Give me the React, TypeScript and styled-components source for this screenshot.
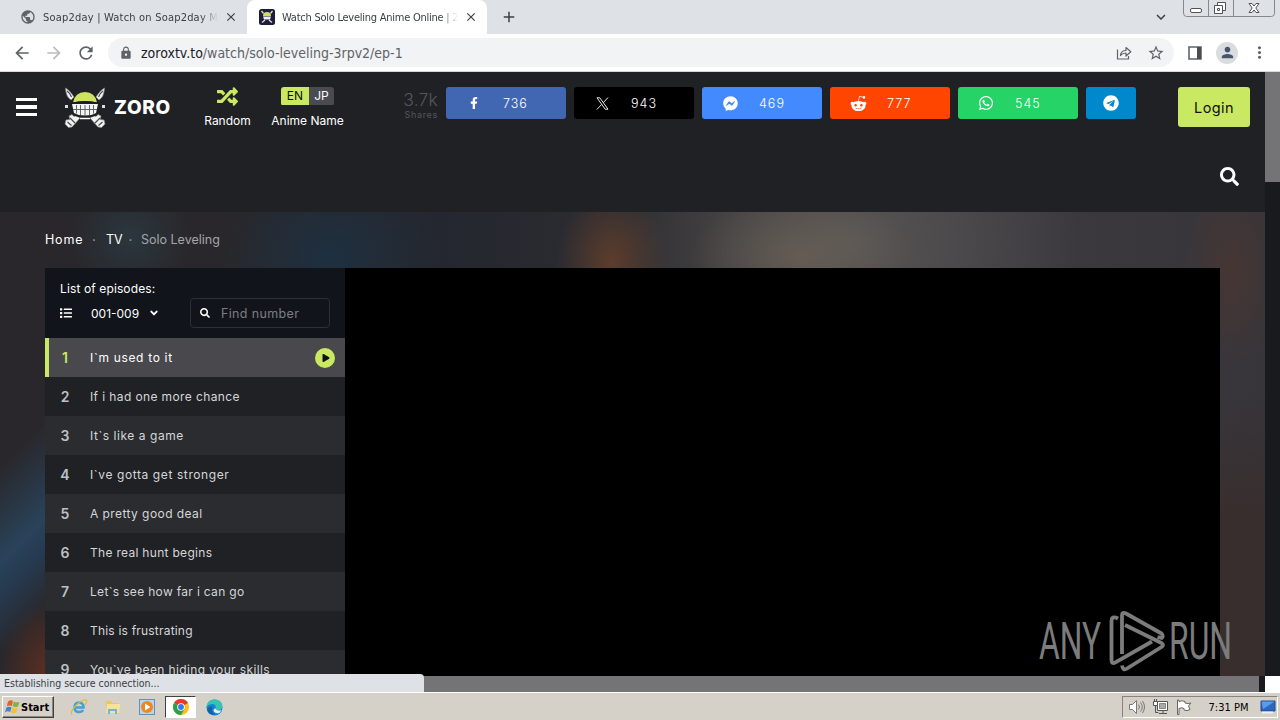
import React from 'react';
import styled, { createGlobalStyle, css } from 'styled-components';
import { FaRandom, FaFacebookF, FaFacebookMessenger, FaWhatsapp, FaTelegram, FaSearch, FaList, FaAngleDown, FaPlay, FaRedditAlien } from 'react-icons/fa';
import { MdArrowBack, MdArrowForward, MdRefresh, MdLock, MdStarBorder, MdClose, MdAdd, MdMoreVert, MdPerson, MdPublic, MdKeyboardArrowDown } from 'react-icons/md';

interface Episode {
  title: string;
  spacing: number;
}

const episodes: Episode[] = [
  { title: 'I`m used to it', spacing: 0.67 },
  { title: 'If i had one more chance', spacing: 0.39 },
  { title: 'It`s like a game', spacing: 0.54 },
  { title: 'I`ve gotta get stronger', spacing: 0.6 },
  { title: 'A pretty good deal', spacing: 0.43 },
  { title: 'The real hunt begins', spacing: 0.3 },
  { title: 'Let`s see how far i can go', spacing: 0.32 },
  { title: 'This is frustrating', spacing: 0.2 },
  { title: 'You`ve been hiding your skills', spacing: 0.37 },
];

const XLogo = () => (
  <svg width="13" height="13" viewBox="0 0 13 13" fill="none" stroke="#fff">
    <path d="M1 .8h2.800l8.200 11.400H9.200z" strokeWidth="0.900" />
    <path d="M12 .5L7.300 5.700M5.600 7.500L.8 12.500" strokeWidth="0.900" />
  </svg>
);

const shares = [
  { name: 'facebook', color: '#4267b2', count: '736', icon: <FaFacebookF size={12} /> },
  { name: 'x', color: '#000000', count: '943', icon: <XLogo /> },
  { name: 'messenger', color: '#448aff', count: '469', icon: <FaFacebookMessenger size={15} /> },
  { name: 'reddit', color: '#ff4500', count: '777', icon: <FaRedditAlien size={17} /> },
  { name: 'whatsapp', color: '#25d366', count: '545', icon: <FaWhatsapp size={16} /> },
];

const SkullLogo = () => (
  <svg width="42" height="42" viewBox="0 0 42 42">
    <g fill="#f2f2f2" stroke="#8b8b8e" strokeWidth="0.700">
      <path d="M1.500 1q4 2 8.500 9l-3 3Q2 10 1.500 1zM40.500 1q-4 2-8.500 9l3 3q5-3 5.500-12z" />
      <path d="M13 28l3 3-8 9-3.500.5L1 37l1-4 4-.5L5 29l3-1.500 2 2zM29 28l-3 3 8 9 3.500.5L41 37l-1-4-4-.5 1-3.500-3-1.500-2 2z" />
    </g>
    <path d="M3 4q3 2 4.500 6M39 4q-3 2-4.500 6M6 31l5 5M3.500 35l4 3.500M36 31l-5 5M38.500 35l-4 3.500" stroke="#4a4a4d" strokeWidth="1.200" fill="none" />
    <path d="M1 19.500h3M38 19.500h3" stroke="#ddd" strokeWidth="3" />
    <path d="M6 14h30l-3 14q-5 3-12 3T9 28z" fill="#202125" />
    <path d="M8 17h26l-2 9q-4 2.500-11 2.500T10 26z" fill="#f4f4f4" />
    <path d="M12.500 18v8.500M16.500 18v10M21 18v11M25.500 18v10M29.500 18v8.500M9 22.500h24" stroke="#55575b" strokeWidth="0.900" />
    <path d="M9 15.500Q11 5 21 5t12 10.500q-12-2.500-24 0z" fill="#d0e164" />
    <path d="M7 16.500q14-3.500 28 0" stroke="#191a1c" strokeWidth="1.600" fill="none" />
    <path d="M16 31.500h10" stroke="#fff" strokeWidth="1.500" />
  </svg>
);

const ZoroFavicon = () => (
  <svg width="16" height="16" viewBox="0 0 16 16">
    <rect width="16" height="16" rx="2.500" fill="#1d1c3a" />
    <path d="M2.500 2l2 2.500M13.500 2l-2 2.500M3 13.500l3-2.500M13 13.500l-3-2.500" stroke="#ddd" strokeWidth="1.300" />
    <path d="M4 7q0-4 4-4t4 4z" fill="#d3dc62" />
    <path d="M4 7.500h8l-1 3H5z" fill="#eee" />
  </svg>
);

const ShareIcon = () => (
  <svg width="16" height="16" viewBox="0 0 16 16" fill="none" stroke="#5f6368" strokeWidth="1.200">
    <path d="M1.500 4.500v9.500h11v-3" />
    <path d="M4.500 10.500q.5-5 5.500-5v-3l4.800 4.300-4.800 4.200v-3q-3.500 0-5.500 2.500z" strokeLinejoin="round" />
  </svg>
);

const SidePanelIcon = () => (
  <svg width="14" height="14" viewBox="0 0 14 14">
    <path d="M1 1h12v12H1z" fill="none" stroke="#5f6368" strokeWidth="1.600" />
    <path d="M9 1h4v12H9z" fill="#4a4d51" />
  </svg>
);

const WindowButtons = () => (
  <svg width="97" height="17" viewBox="0 0 97 17" fill="none">
    <path d="M.5 0v13q0 3.500 3 3.500h85q3 0 3-3.500V0M25.500 0v16M50.500 0v16" stroke="#85888e" />
    <rect x="7.500" y="8.500" width="11" height="4" rx="1.500" fill="#fff" stroke="#4f5259" />
    <path d="M34.500 2.500h8v8h-8z" fill="#fff" stroke="#4f5259" />
    <path d="M31.500 5.500h8v8h-8z" fill="#fff" stroke="#4f5259" />
    <path d="M34.500 8.500h2v2h-2z" stroke="#4f5259" />
    <path d="M66 3.500h3l2 2.500 2-2.500h3L72.800 8l3.200 4.500h-3L71 10l-2 2.500h-3L69.200 8z" fill="#fff" stroke="#4f5259" />
  </svg>
);

const MenuBars = () => (
  <svg width="21" height="18" viewBox="0 0 21 18" fill="#fff">
    <path d="M0 0h21v3H0zM0 7h21v4H0zM0 15h21v3H0z" />
  </svg>
);

const WindowsFlag = () => (
  <svg width="16" height="16" viewBox="0 0 16 16">
    <path d="M3 2.500q3-2 5-.5L6.800 7q-2.500-1.200-5 .3z" fill="#e5602b" />
    <path d="M8.800 2.500q2.500 1.600 5.700.2l-1.500 4.800q-3 1.300-5.400-.2z" fill="#82b440" />
    <path d="M1.400 8.500q2.500-1.500 5.100-.3L5.200 13q-2.500-1.500-5.200.2z" fill="#3f84c6" />
    <path d="M7.300 8.600q2.500 1.500 5.500.2l-1.500 4.800q-3 1.400-5.400-.2z" fill="#f5c22e" />
  </svg>
);

const IeIcon = () => (
  <svg width="18" height="18" viewBox="0 0 18 18" fill="none">
    <path d="M4.500 9.500h9q0-5-4.500-5T4.500 9.500q0 4.500 4.500 4.500 3 0 4-2" stroke="#3aa3e3" strokeWidth="2.600" />
    <path d="M2 16.500Q-.5 14 6 7.500T16 2q2 1-1 5" stroke="#e3b93c" strokeWidth="1.200" />
  </svg>
);

const FolderIcon = () => (
  <svg width="18" height="18" viewBox="0 0 18 18">
    <path d="M2 3h5l1 2h7v10H2z" fill="#e8c860" />
    <path d="M3 6h13l-1 9H2z" fill="#f6e39a" />
    <path d="M4 16v-5h9v5h-2v-3H6v3z" fill="#6eb4dc" />
  </svg>
);

const MediaIcon = () => (
  <svg width="18" height="18" viewBox="0 0 18 18">
    <rect x="1.500" y="1.500" width="15" height="15" fill="#b7d6ee" stroke="#5e93be" />
    <circle cx="9" cy="9" r="6" fill="#ef8720" />
    <path d="M7 5.500L12.500 9 7 12.500z" fill="#fff" />
  </svg>
);

const ChromeIcon = () => (
  <svg width="16" height="16" viewBox="0 0 16 16">
    <circle cx="8" cy="8" r="8" fill="#fbc116" />
    <path d="M8 8L1.070 4A8 8 0 0 1 14.930 4z" fill="#e33b2e" />
    <path d="M8 8L1.070 4A8 8 0 0 0 8 16l3.500-6z" fill="#2aa14a" />
    <circle cx="8" cy="8" r="3.800" fill="#fff" />
    <circle cx="8" cy="8" r="2.900" fill="#3b78e7" />
  </svg>
);

const EdgeIcon = () => (
  <svg width="17" height="17" viewBox="0 0 17 17">
    <circle cx="8.500" cy="8.500" r="8" fill="#1583d0" />
    <path d="M.5 8Q1 .5 8.500.5T16.500 7q0 4-4.500 4-2.500 0-2.500-1.500Q10.500 5 6.500 5T.5 8z" fill="#38c3b0" />
    <path d="M6.500 7.500q-2 5 2.500 8-6 1-8-5 1-3 5.500-3z" fill="#1260a8" />
    <path d="M9.500 9.500q1 3 6 1.500l-2 3q-5 1-6-2.500 0-2 2-2z" fill="#e8eef0" />
  </svg>
);

const SpeakerIcon = () => (
  <svg width="17" height="16" viewBox="0 0 17 16" fill="none" stroke="#777">
    <path d="M1.500 5.500h3l4-4v13l-4-4h-3z" fill="#fff" />
    <path d="M10.500 5.500q2 2.500 0 5M12.500 3.500q3.500 4.500 0 9M14.500 2q4 6 0 12" />
  </svg>
);

const NetworkIcon = () => (
  <svg width="17" height="16" viewBox="0 0 17 16" fill="none" stroke="#555">
    <path d="M5.500 2.500h10v9h-10z" fill="#fff" />
    <path d="M7.500 4.500h6v5h-6z" fill="#aaa" stroke="#888" />
    <path d="M7 14.500h8M11 12v2" />
    <path d="M1.500 2.500h4v4h-4zM2.500 0v2M4.500 0v2" fill="#fff" />
    <path d="M3.500 7v6.500h3" />
  </svg>
);

const FlagIcon = () => (
  <svg width="16" height="16" viewBox="0 0 16 16" stroke="#666" fill="#fff">
    <path d="M1.500 1v14.500h1.500V9.500q3-1.500 5 0v1.500q3 1.500 6-.5l-1.500-3.500L15 4q-3 1-6 0V2.500Q6 1 3 2.500V1z" />
  </svg>
);

const DisplayIcon = () => (
  <svg width="16" height="14" viewBox="0 0 16 14">
    <path d="M1 1h14v10H1z" fill="#2c67c5" stroke="#234a80" />
    <path d="M1.500 1.500h13L3 9z" fill="#5b9be8" />
    <path d="M2 12.500h11" stroke="#e8f0fa" strokeWidth="2" />
  </svg>
);

const WatermarkArt = () => (
  <svg width="196" height="66" viewBox="0 0 196 66">
    <text x="0" y="51" textLength="62" lengthAdjust="spacingAndGlyphs">ANY</text>
    <text x="130" y="51" textLength="63" lengthAdjust="spacingAndGlyphs">RUN</text>
    <g fill="none" stroke="#7c7c7c" strokeWidth="3.800" strokeLinejoin="round">
      <path d="M79 10.500q-6.500-3.500-6.500 3V52q0 4.500 4 2.300L113 33.500" />
      <path d="M83 46V7.500q0-4 4-2l35.500 20q2.500 3 0 4.500l-4-1" />
      <path d="M86 17l36.500 18q3 2 0 4L88 60.500q-4 2.500-5-3" />
    </g>
  </svg>
);

const App: React.FC = () => {
  return (
    <Screen>
      <GlobalStyle />
      <TabStrip>
        <Tab>
          <MdPublic size={16} color="#5f6368" />
          <TabTitle $spacing={0.2}>Soap2day | Watch on Soap2day Mo</TabTitle>
          <MdClose size={14} color="#3c4043" />
        </Tab>
        <Tab $active>
          <ZoroFavicon />
          <TabTitle $spacing={-0.25}>Watch Solo Leveling Anime Online | 2</TabTitle>
          <MdClose size={14} color="#3c4043" />
        </Tab>
        <NewTab><MdAdd size={18} /></NewTab>
        <TabSearch><MdKeyboardArrowDown size={18} /></TabSearch>
        <WindowButtons />
      </TabStrip>
      <Toolbar>
        <ToolbarIcon $width={28}><MdArrowBack size={20} /></ToolbarIcon>
        <ToolbarIcon $width={36} $dim><MdArrowForward size={20} /></ToolbarIcon>
        <ToolbarIcon $width={28}><MdRefresh size={20} /></ToolbarIcon>
        <AddressBar>
          <MdLock size={14} color="#5f6368" />
          <Url><b>zoroxtv.to</b>/watch/solo-leveling-3rpv2/ep-1</Url>
          <ShareIcon />
          <MdStarBorder size={18} color="#5f6368" />
        </AddressBar>
        <ToolbarIcon $width={34}><SidePanelIcon /></ToolbarIcon>
        <Avatar><MdPerson size={17} /></Avatar>
        <ToolbarIcon $width={42}><MdMoreVert size={19} /></ToolbarIcon>
      </Toolbar>

      <Viewport>
        <Page>
          <Header>
            <MenuButton><MenuBars /></MenuButton>
            <Brand>
              <SkullLogo />
              <BrandName>ZORO</BrandName>
            </Brand>
            <HeaderTool $width={47}>
              <RandomIcon><FaRandom size={21} /></RandomIcon>
              <ToolLabel>Random</ToolLabel>
            </HeaderTool>
            <HeaderTool $width={75} $gap={19}>
              <LangSwitch><Lang $active>EN</Lang><Lang>JP</Lang></LangSwitch>
              <ToolLabel>Anime Name</ToolLabel>
            </HeaderTool>
            <ShareTotal>
              <strong>3.7k</strong>
              <small>Shares</small>
            </ShareTotal>
            <ShareList>
              {shares.map((share) => (
                <ShareButton key={share.name} $color={share.color}>
                  <ShareGlyph>{share.icon}</ShareGlyph>
                  <span>{share.count}</span>
                </ShareButton>
              ))}
              <ShareButton $color="#0088cc" $small><FaTelegram size={16} /></ShareButton>
            </ShareList>
            <AccountArea>
              <LoginButton>Login</LoginButton>
              <SearchToggle><FaSearch size={19} /></SearchToggle>
            </AccountArea>
          </Header>

          <Backdrop>
            <Breadcrumb>
              <Crumb $width={39}>Home</Crumb>
              <Dot $width={22}>•</Dot>
              <Crumb $width={16}>TV</Crumb>
              <Dot $width={19}>•</Dot>
              <CurrentCrumb>Solo Leveling</CurrentCrumb>
            </Breadcrumb>
            <Watch>
              <EpisodePanel>
                <PanelHead>
                  <PanelTitle>List of episodes:</PanelTitle>
                  <PanelTools>
                    <FaList size={12} />
                    <Range>001-009</Range>
                    <FaAngleDown size={12} />
                    <FindBox>
                      <FaSearch size={10} color="#fff" />
                      <span>Find number</span>
                    </FindBox>
                  </PanelTools>
                </PanelHead>
                {episodes.map((ep, i) => (
                  <EpisodeRow key={ep.title} $active={i === 0} $odd={i % 2 === 0}>
                    <EpisodeNumber>{i + 1}</EpisodeNumber>
                    <EpisodeTitle $spacing={ep.spacing}>{ep.title}</EpisodeTitle>
                    {i === 0 && <PlayBadge><FaPlay size={8} /></PlayBadge>}
                  </EpisodeRow>
                ))}
              </EpisodePanel>
              <Player />
            </Watch>
          </Backdrop>
        </Page>
        <VerticalTrack><VerticalThumb /></VerticalTrack>
        <Watermark><WatermarkArt /></Watermark>
      </Viewport>

      <HorizontalTrack>
        <HorizontalThumb />
        <Corner />
        <StatusBubble>Establishing secure connection...</StatusBubble>
      </HorizontalTrack>

      <Taskbar>
        <StartButton><WindowsFlag />Start</StartButton>
        <QuickLaunch>
          <TaskItem><IeIcon /></TaskItem>
          <TaskItem><FolderIcon /></TaskItem>
          <TaskItem><MediaIcon /></TaskItem>
          <TaskItem $active><ChromeIcon /></TaskItem>
          <TaskItem><EdgeIcon /></TaskItem>
        </QuickLaunch>
        <Tray>
          <SpeakerIcon />
          <NetworkIcon />
          <FlagIcon />
          <Clock>7:31 PM</Clock>
          <DisplayIcon />
        </Tray>
      </Taskbar>
    </Screen>
  );
};

export default App;

const siteFont = css`
  font-family: Inter, 'Open Sans', sans-serif;
  font-stretch: normal;
`;

const systemFont = css`
  font-family: 'DejaVu Sans Condensed', 'DejaVu Sans', sans-serif;
  font-stretch: condensed;
`;

const GlobalStyle = createGlobalStyle`
  * {
    box-sizing: border-box;
  }

  body {
    margin: 0;
    overflow: hidden;
  }

  svg {
    display: block;
    flex-shrink: 0;
  }
`;

const Screen = styled.div`
  width: 1280px;
  height: 720px;
  display: flex;
  flex-direction: column;
  overflow: hidden;
  background: #fff;
  ${systemFont}
`;

const TabStrip = styled.div`
  height: 34px;
  flex-shrink: 0;
  display: flex;
  background: #dee1e6;
  padding-left: 7px;
`;

const Tab = styled.div<{ $active?: boolean }>`
  width: 240px;
  height: 34px;
  padding: 0 9px 0 ${(p) => (p.$active ? 12 : 13)}px;
  display: flex;
  align-items: center;
  border-radius: 8px 8px 0 0;
  background: ${(p) => (p.$active ? '#fff' : 'transparent')};
`;

const TabTitle = styled.span<{ $spacing: number }>`
  width: 176px;
  margin: 0 6px 0 7px;
  overflow: hidden;
  white-space: nowrap;
  font-size: 11px;
  letter-spacing: ${(p) => p.$spacing}px;
  color: #3c4043;
  mask-image: linear-gradient(90deg, #000 90%, transparent);
`;

const NewTab = styled.div`
  width: 44px;
  display: flex;
  align-items: center;
  justify-content: center;
  color: #3c4043;
`;

const TabSearch = styled.div`
  margin-left: auto;
  margin-right: 13px;
  display: flex;
  align-items: center;
  color: #3c4043;
`;

const Toolbar = styled.div`
  height: 38px;
  flex-shrink: 0;
  display: flex;
  align-items: center;
  padding-left: 8px;
  border-bottom: 1px solid #d5d7da;
`;

const ToolbarIcon = styled.div<{ $width: number; $dim?: boolean }>`
  width: ${(p) => p.$width}px;
  display: flex;
  justify-content: center;
  color: ${(p) => (p.$dim ? '#babcbe' : '#5f6368')};
`;

const AddressBar = styled.div`
  flex: 1;
  height: 29px;
  margin: 0 4px 0 8px;
  padding: 0 9px 0 11px;
  display: flex;
  align-items: center;
  gap: 15px;
  border-radius: 15px;
  background: #f1f3f4;
`;

const Url = styled.span`
  flex: 1;
  margin-left: -7px;
  font-size: 14px;
  color: #5f6368;

  b {
    font-weight: 400;
    color: #202124;
  }
`;

const Avatar = styled.div`
  width: 22px;
  height: 22px;
  margin-left: 4px;
  display: flex;
  align-items: center;
  justify-content: center;
  border-radius: 50%;
  background: #dadce0;
  color: #49536e;
`;

const Viewport = styled.div`
  position: relative;
  height: 604px;
  flex-shrink: 0;
  display: flex;
  overflow: hidden;
`;

const Page = styled.div`
  width: 1265px;
  display: flex;
  flex-direction: column;
  ${siteFont}
  color: #fff;
`;

const Header = styled.div`
  height: 140px;
  flex-shrink: 0;
  display: flex;
  align-items: flex-start;
  padding: 15px 15px 0 16px;
  background: #202125;
`;

const MenuButton = styled.div`
  width: 48px;
  padding-top: 11px;
`;

const Brand = styled.div`
  width: 140px;
  display: flex;
  align-items: center;
`;

const BrandName = styled.span`
  margin: -1px 0 0 8px;
  font-size: 19px;
  font-weight: 800;
  letter-spacing: 0.7px;
`;

const HeaderTool = styled.div<{ $width: number; $gap?: number }>`
  width: ${(p) => p.$width}px;
  margin-left: ${(p) => p.$gap ?? 0}px;
  display: flex;
  flex-direction: column;
  align-items: center;
`;

const RandomIcon = styled.div`
  height: 19px;
  display: flex;
  align-items: center;
  color: #cae962;
`;

const ToolLabel = styled.span`
  margin-top: 7px;
  font-size: 12px;
  line-height: 16px;
  white-space: nowrap;
`;

const LangSwitch = styled.div`
  height: 19px;
  display: flex;
  overflow: hidden;
  border-radius: 3px;
`;

const Lang = styled.span<{ $active?: boolean }>`
  width: ${(p) => (p.$active ? 28 : 25)}px;
  height: 18px;
  line-height: 18px;
  text-align: center;
  font-size: 12px;
  background: ${(p) => (p.$active ? '#cae962' : '#4a4b51')};
  color: ${(p) => (p.$active ? '#111' : '#fff')};
`;

const ShareTotal = styled.div`
  width: 38px;
  margin: 4px 0 0 55px;
  display: flex;
  flex-direction: column;
  align-items: flex-end;
  color: #55565a;

  strong {
    font-size: 17.5px;
    font-weight: 300;
    line-height: 18px;
    letter-spacing: 0.2px;
  }

  small {
    font-size: 9px;
    line-height: 11px;
    letter-spacing: 0.7px;
  }
`;

const ShareList = styled.div`
  display: flex;
  gap: 8px;
  margin-left: 8px;
`;

const ShareButton = styled.div<{ $color: string; $small?: boolean }>`
  width: ${(p) => (p.$small ? 50 : 120)}px;
  height: 32px;
  display: flex;
  align-items: center;
  justify-content: ${(p) => (p.$small ? 'center' : 'flex-start')};
  border-radius: 3px;
  background: ${(p) => p.$color};
  font-size: 12.5px;
  font-weight: 300;
  letter-spacing: 1px;
`;

const ShareGlyph = styled.div`
  width: 57px;
  padding-right: 1px;
  display: flex;
  justify-content: center;
`;

const AccountArea = styled.div`
  margin-left: auto;
  display: flex;
  flex-direction: column;
  align-items: flex-end;
`;

const LoginButton = styled.div`
  width: 72px;
  height: 40px;
  line-height: 41px;
  text-align: center;
  border-radius: 3px;
  background: #cae962;
  color: #111;
  font-size: 14.5px;
  letter-spacing: 0.4px;
`;

const SearchToggle = styled.div`
  margin: 40px 11px 0 0;
`;

// stack of soft colour spots standing in for the blurred cover art
const Backdrop = styled.div`
  flex: 1;
  padding: 0 45px;
  overflow: hidden;
  background:
    radial-gradient(ellipse 55px 75px at 612px 50px, #5d3d2c 0%, rgba(99, 64, 43, 0) 100%),
    radial-gradient(ellipse 110px 70px at 800px 45px, rgba(108, 98, 86, 0.7) 0%, rgba(108, 98, 86, 0) 100%),
    radial-gradient(ellipse 230px 180px at 850px 30px, #595655 0%, rgba(89, 86, 85, 0) 100%),
    radial-gradient(ellipse 110px 100px at 330px 45px, #1e3040 0%, rgba(30, 48, 64, 0) 100%),
    radial-gradient(ellipse 60px 60px at 130px 25px, #2a373e 0%, rgba(42, 55, 62, 0) 100%),
    radial-gradient(ellipse 50px 100px at 1232px 60px, #463633 0%, rgba(70, 54, 51, 0) 100%),
    radial-gradient(ellipse 50px 75px at 50px 464px, #5f2f20 0%, rgba(95, 47, 32, 0) 100%),
    linear-gradient(135deg, rgba(41, 66, 89, 0) 180px, #29435a 248px, #263b52 268px, rgba(41, 66, 89, 0) 315px) 0 0 / 45px 464px no-repeat,
    linear-gradient(180deg, rgba(56, 46, 46, 0) 180px, #382e2e 300px) 1220px 0 / 45px 464px no-repeat,
    linear-gradient(90deg, #29272b 0%, #29272b 20%, #24272f 35%, #302f32 55%, #3c3b40 75%, #37353a 100%);
`;

const Breadcrumb = styled.div`
  height: 56px;
  padding-bottom: 1px;
  display: flex;
  align-items: center;
  font-size: 12.5px;
`;

const Crumb = styled.a<{ $width: number }>`
  width: ${(p) => p.$width}px;
  letter-spacing: 0.8px;
  white-space: nowrap;

  & ~ & {
    letter-spacing: 0;
  }
`;

const Dot = styled.span<{ $width: number }>`
  width: ${(p) => p.$width}px;
  padding-right: 2px;
  text-align: center;
  font-size: 6px;
  color: #999;
`;

const CurrentCrumb = styled.span`
  color: #a5a5a8;
`;

const Watch = styled.div`
  display: flex;
`;

const EpisodePanel = styled.div`
  width: 300px;
  flex-shrink: 0;
`;

const PanelHead = styled.div`
  height: 70px;
  padding: 12px 15px 0;
  background: #12141b;
`;

const PanelTitle = styled.div`
  font-size: 12px;
  line-height: 18px;
  letter-spacing: 0.12px;
`;

const PanelTools = styled.div`
  display: flex;
  align-items: center;
  font-size: 12px;
`;

const Range = styled.span`
  width: 57px;
  margin-left: 19px;
`;

const FindBox = styled.div`
  width: 140px;
  height: 30px;
  margin-left: auto;
  padding-left: 9px;
  display: flex;
  align-items: center;
  gap: 11px;
  border: 1px solid #2e3037;
  border-radius: 4px;
  font-size: 12.5px;
  letter-spacing: 0.35px;
  color: #7d7e84;
`;

const EpisodeRow = styled.div<{ $active: boolean; $odd: boolean }>`
  height: 39px;
  padding-right: 10px;
  display: flex;
  align-items: center;
  background: ${(p) => (p.$active ? '#48484d' : p.$odd ? '#2a2c2f' : '#202125')};
  border-left: 4px solid ${(p) => (p.$active ? '#cae962' : 'transparent')};
  color: ${(p) => (p.$active ? '#fff' : '#d5d6d8')};

  & > :first-child {
    color: ${(p) => (p.$active ? '#cae962' : '#bfc0c2')};
  }
`;

const EpisodeNumber = styled.span`
  width: 32px;
  text-align: center;
  font-size: 14px;
  font-weight: 600;
`;

const EpisodeTitle = styled.span<{ $spacing: number }>`
  flex: 1;
  margin-left: 9px;
  white-space: nowrap;
  font-size: 12px;
  letter-spacing: ${(p) => p.$spacing}px;
`;

const PlayBadge = styled.span`
  width: 20px;
  height: 20px;
  padding-left: 2px;
  display: flex;
  align-items: center;
  justify-content: center;
  border-radius: 50%;
  background: #cae962;
  color: #111;
`;

const Player = styled.div`
  flex: 1;
  height: 420px;
  background: #000;
`;

const VerticalTrack = styled.div`
  width: 15px;
  background: #191a1e;
`;

const VerticalThumb = styled.div`
  height: 110px;
  background: #747376;
`;

// floats above the player in the lower right corner
const Watermark = styled.div`
  position: absolute;
  right: 45px;
  bottom: 2px;

  text {
    font-family: 'Roboto', sans-serif;
    font-stretch: normal;
    font-weight: 400;
    font-size: 52px;
    fill: #7c7c7c;
  }
`;

const HorizontalTrack = styled.div`
  position: relative;
  height: 16px;
  flex-shrink: 0;
  display: flex;
  background: #191a1e;
`;

const HorizontalThumb = styled.div`
  width: 1259px;
  background: #747476;
`;

const Corner = styled.div`
  width: 15px;
  margin-left: auto;
  background: #fff;
`;

const StatusBubble = styled.div`
  position: absolute;
  left: 0;
  bottom: 0;
  width: 424px;
  height: 18px;
  padding-left: 4px;
  line-height: 18px;
  border-radius: 0 4px 0 0;
  background: #dee1e6;
  color: #3c4043;
  font-size: 10.5px;
`;

const Taskbar = styled.div`
  height: 28px;
  flex-shrink: 0;
  display: flex;
  align-items: center;
  padding: 1px 2px 0 2px;
  background: #d6d1c8;
  border-top: 1px solid #fff;
`;

const StartButton = styled.div`
  width: 52px;
  height: 22px;
  padding-left: 2px;
  display: flex;
  align-items: center;
  border: 1px solid;
  border-color: #fff #404040 #404040 #fff;
  box-shadow: inset -1px -1px 0 #8b8680;
  font-size: 11px;
  font-weight: 700;
  color: #000;
`;

const QuickLaunch = styled.div`
  margin-left: 9px;
  display: flex;
  gap: 3px;
`;

const TaskItem = styled.div<{ $active?: boolean }>`
  width: 31px;
  height: 22px;
  display: flex;
  align-items: center;
  justify-content: center;
  ${(p) =>
    p.$active &&
    css`
      background: #fff;
      border: 1px solid;
      border-color: #404040 #fff #fff #404040;
    `}
`;

const Tray = styled.div`
  width: 156px;
  height: 22px;
  margin-left: auto;
  padding: 0 1px 0 5px;
  display: flex;
  align-items: center;
  gap: 7px;
  border: 1px solid;
  border-color: #88837c #fff #fff #88837c;
`;

const Clock = styled.span`
  flex: 1;
  padding-left: 5px;
  text-align: center;
  white-space: nowrap;
  font-size: 11px;
  color: #000;
`;
